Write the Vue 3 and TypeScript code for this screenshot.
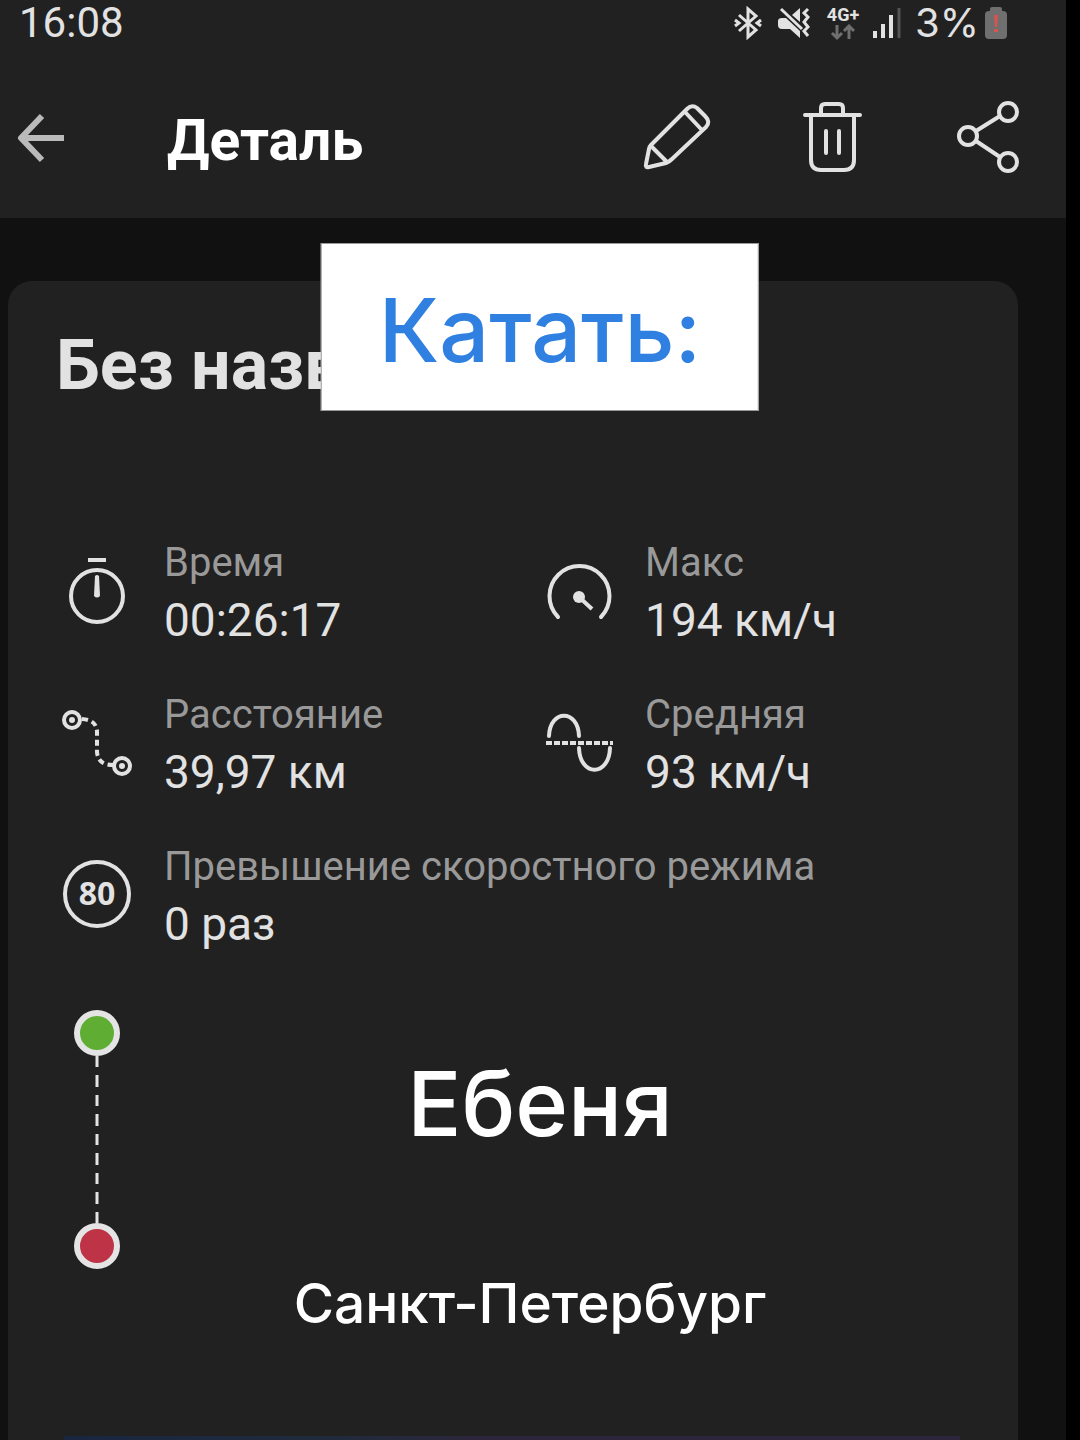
<script setup lang="ts">
interface Stat {
  icon: 'time' | 'gauge' | 'route' | 'wave' | 'limit'
  label: string
  value: string
  wide?: boolean
}

const stats: Stat[] = [
  { icon: 'time', label: 'Время', value: '00:26:17' },
  { icon: 'gauge', label: 'Макс', value: '194 км/ч' },
  { icon: 'route', label: 'Расстояние', value: '39,97 км' },
  { icon: 'wave', label: 'Средняя', value: '93 км/ч' },
  { icon: 'limit', label: 'Превышение скоростного режима', value: '0 раз', wide: true },
]
</script>

<template>
  <div class="screen">
    <div class="app">
      <header class="header">
        <div class="status">
          <span class="clock">16:08</span>
          <div class="indicators">
            <svg class="bluetooth" width="28" height="34" viewBox="0 0 28 34" aria-hidden="true">
              <path d="M5 9 L22 24 L14 31 V3 L22 10 L5 25" />
              <path d="M1 14 L5 17 L1 20 M27 14 L23 17 L27 20" />
            </svg>
            <svg class="mute" width="34" height="32" viewBox="0 0 34 32" aria-hidden="true">
              <path class="solid" d="M0 14 Q0 11 4 11 H8 L22 24 V31 L12 22 H4 Q0 22 0 18 Z M14 8 L22 1 V15 Z" />
              <path class="line" d="M3 2 L24 22" />
              <path class="line" d="M30 2 L26 6 L30 10 L26 15 L30 20 L26 24 L30 29" />
            </svg>
            <div class="network">
              <span>4G+</span>
              <svg width="26" height="17" viewBox="0 0 26 17" aria-hidden="true">
                <path d="M7 1 V14 M2 9 L7 14 L12 9 M19 15 V2 M14 7 L19 2 L24 7" />
              </svg>
            </div>
            <svg class="signal" width="28" height="32" viewBox="0 0 28 32" aria-hidden="true">
              <path d="M2 24 V31 M10 17 V31 M18 8 V31" />
              <path class="weak" d="M26 1 V31" />
            </svg>
            <span class="percent">3%</span>
            <svg width="22" height="32" viewBox="0 0 22 32" aria-hidden="true">
              <path fill="#6f6f6f" d="M5 4 V2 Q5 0 7 0 H15 Q17 0 17 2 V4 H18 Q22 4 22 8 V28 Q22 32 18 32 H4 Q0 32 0 28 V8 Q0 4 4 4 Z" />
              <path fill="#d9534f" d="M9 8 H13 L12 20 H10 Z M9 22 H13 V25 H9 Z" />
            </svg>
          </div>
        </div>
        <div class="toolbar">
          <button type="button" class="back" aria-label="Назад">
            <svg viewBox="0 0 72 72"><path d="M37 15 L16 37 L37 59 M16 37 H59" /></svg>
          </button>
          <h1>Деталь</h1>
          <div class="actions">
            <button type="button" aria-label="Изменить">
              <svg viewBox="0 0 72 72">
                <path d="M11 44 L47 8 Q52 3 57 7 L65 15 Q71 21 66 26 L32 58 Q29 61 26 62 L9 66 Q5 67 6 63 L9 48 Q9 46 11 44 Z M45 11 L61 28 M11 45 L27 61" />
              </svg>
            </button>
            <button type="button" aria-label="Удалить">
              <svg viewBox="0 0 72 72">
                <path d="M9 14 H64 M25 13 V7 Q25 3 29 3 H43 Q47 3 47 7 V13 M15 15 V59 Q15 69 25 69 H48 Q58 69 58 59 V15 M30 30 V52 M43 30 V52" />
              </svg>
            </button>
            <button type="button" aria-label="Поделиться">
              <svg viewBox="0 0 72 72">
                <circle cx="56" cy="11" r="9" /><circle cx="16" cy="35" r="9" /><circle cx="56" cy="61" r="9" />
                <path d="M24 30 L48 15 M24 40 L48 56" />
              </svg>
            </button>
          </div>
        </div>
      </header>

      <main class="card">
        <h2>Без назв</h2>

        <dl class="stats">
          <div v-for="s in stats" :key="s.label" class="stat" :class="{ wide: s.wide }">
            <svg class="glyph" viewBox="0 0 82 116" aria-hidden="true">
              <template v-if="s.icon === 'time'">
                <circle cx="41" cy="62" r="26" />
                <path d="M32 26 H50" />
                <path class="fill" d="M39 42 Q41 40 43 42 L44 62 Q41 65 38 62 Z" />
              </template>
              <template v-else-if="s.icon === 'gauge'">
                <path class="round" d="M21 83 A30 30 0 1 1 64 83" />
                <circle class="fill" cx="42" cy="63" r="6" />
                <path d="M42 63 L55 75" />
              </template>
              <template v-else-if="s.icon === 'route'">
                <circle cx="16" cy="34" r="8" /><circle class="fill" cx="16" cy="34" r="3" />
                <circle cx="66" cy="80" r="8" /><circle class="fill" cx="66" cy="80" r="3" />
                <path stroke-dasharray="6 4" d="M26 33 Q41 34 41 46 V66 Q42 79 57 79" />
              </template>
              <template v-else-if="s.icon === 'wave'">
                <path class="round" d="M12 50 C13 23 41 23 42 50 M42 62 C43 91 72 91 73 62" />
                <path stroke-dasharray="6 2" d="M9 57 H76" />
              </template>
              <template v-else>
                <circle cx="41" cy="56" r="32" />
                <text x="41" y="67" text-anchor="middle">80</text>
              </template>
            </svg>
            <div class="figures">
              <dt>{{ s.label }}</dt>
              <dd>{{ s.value }}</dd>
            </div>
          </div>
        </dl>

        <section class="trip">
          <svg class="markers" viewBox="0 0 82 260" aria-hidden="true">
            <path d="M41 46 V214" stroke="#e4e4e4" stroke-width="3" stroke-dasharray="11 8 12 8" />
            <circle cx="41" cy="23" r="20" fill="#5fae33" stroke="#e4e4e4" stroke-width="6" />
            <circle cx="41" cy="236" r="20" fill="#bf3347" stroke="#e4e4e4" stroke-width="6" />
          </svg>
          <div class="places">
            <p class="from">Ебеня</p>
            <p class="to">Санкт-Петербург</p>
          </div>
        </section>

        <div class="map"></div>
      </main>
    </div>
    <p class="callout">Катать:</p>
  </div>
</template>

<style>
body {
  margin: 0;
  background: #000;
}
</style>

<style scoped>
.screen {
  position: relative;
  box-sizing: border-box;
  padding-right: 14px;
  background: #000;
  font-family: Roboto, sans-serif;
  color: #e2e2e2;
}
.app {
  display: flex;
  flex-direction: column;
  min-height: 100vh;
  background: #111;
}
h1, h2, p, dl, dd {
  margin: 0;
}
.header {
  background: #212121;
}
.status {
  display: flex;
  justify-content: space-between;
  align-items: center;
  height: 46px;
  padding: 0 59px 0 19px;
}
.clock {
  font-size: 42px;
  line-height: 48px;
}
.indicators {
  display: flex;
  align-items: center;
}
.indicators svg {
  flex: none;
  fill: none;
  stroke-width: 4;
}
.indicators .bluetooth {
  stroke: #e2e2e2;
  stroke-width: 3;
  margin-right: 16px;
}
.mute {
  margin-right: 13px;
}
.mute .solid {
  fill: #e2e2e2;
}
.mute .line {
  stroke: #e2e2e2;
  stroke-width: 3;
}
.network {
  display: flex;
  flex-direction: column;
  align-items: center;
  width: 36px;
  margin-right: 12px;
  font-size: 18px;
  font-weight: 700;
  line-height: 18px;
}
.network svg {
  stroke: #6f6f6f;
  stroke-width: 3;
}
.signal {
  stroke: #e2e2e2;
  margin-right: 14px;
}
.signal .weak {
  stroke: #555;
  stroke-width: 3;
}
.percent {
  margin-right: 6px;
  font-family: Inter, sans-serif;
  font-size: 40px;
  line-height: 48px;
}
.toolbar {
  display: flex;
  align-items: center;
  height: 162px;
  padding: 10px 42px 0 5px;
}
button {
  width: 72px;
  height: 72px;
  padding: 0;
  border: 0;
  background: none;
  color: #e2e2e2;
}
button svg {
  display: block;
  fill: none;
  stroke: currentColor;
  stroke-width: 4;
  stroke-linecap: round;
  stroke-linejoin: round;
}
.back {
  color: #bababa;
}
.back svg {
  stroke-width: 6;
  stroke-linecap: butt;
}
h1 {
  margin-left: 90px;
  padding-top: 8px;
  font-size: 57px;
  font-weight: 700;
  line-height: 72px;
  color: #fff;
}
.actions {
  display: flex;
  gap: 84px;
  margin-left: auto;
}
.card {
  display: flex;
  flex: 1;
  flex-direction: column;
  margin: 63px 48px 0 8px;
  padding: 44px 48px 0;
  border-radius: 24px 24px 0 0;
  background: #212121;
}
h2 {
  font-size: 70px;
  font-weight: 700;
  line-height: 80px;
}
.stats {
  display: grid;
  grid-template-columns: minmax(0, 10fr) minmax(0, 9fr);
  row-gap: 36px;
  margin-top: 129px;
}
.stat {
  display: flex;
  gap: 26px;
}
.wide {
  grid-column: 1 / -1;
}
.glyph {
  flex: none;
  width: 82px;
  height: 116px;
  fill: none;
  stroke: #e2e2e2;
  stroke-width: 4;
}
.glyph .fill {
  fill: #e2e2e2;
  stroke: none;
}
.glyph .round {
  stroke-linecap: round;
}
.glyph text {
  fill: #e2e2e2;
  stroke: none;
  font: 700 32px "Noto Sans", sans-serif;
}
dt {
  font-size: 40px;
  line-height: 58px;
  color: #999;
}
dd {
  font-size: 46px;
  line-height: 56px;
}
.trip {
  display: flex;
  margin-top: 56px;
}
.markers {
  flex: none;
  width: 82px;
  height: 260px;
  fill: none;
}
.places {
  flex: 1;
  padding: 38px 28px 0 0;
  font-family: Inter, sans-serif;
  font-weight: 500;
  text-align: center;
  color: #fff;
}
.from {
  font-size: 90px;
  line-height: 112px;
}
.to {
  margin-top: 107px;
  padding-right: 20px;
  font-size: 55px;
  line-height: 72px;
}
.map {
  flex: 1;
  min-height: 4px;
  margin: 97px 10px 0 8px;
  background: linear-gradient(90deg, #182640, #202a3c 30%, #2b263b 45%, #2b263b);
}
.callout {
  position: absolute;
  top: 243px;
  left: 50%;
  box-sizing: border-box;
  padding: 30px 57px 24px;
  border: 1px solid #999;
  transform: translateX(-50%);
  background: #fff;
  font-family: Inter, sans-serif;
  font-size: 88px;
  font-weight: 500;
  line-height: 112px;
  white-space: nowrap;
  color: #2f80e0;
}
</style>
